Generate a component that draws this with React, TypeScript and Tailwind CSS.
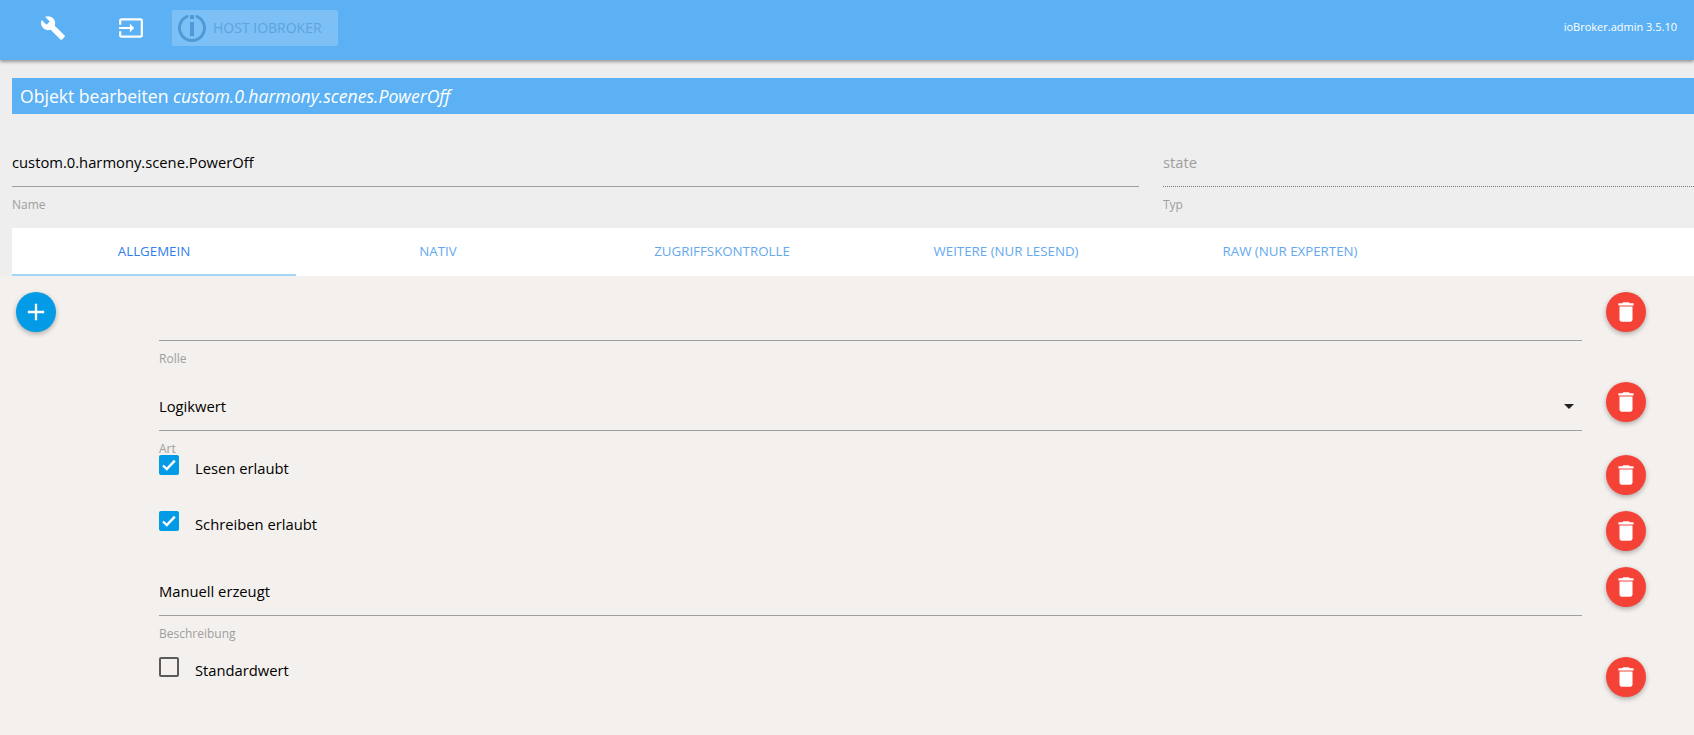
import { MdAdd, MdBuild, MdDelete, MdInput } from "react-icons/md";

const tabs = ["Allgemein", "Nativ", "Zugriffskontrolle", "Weitere (nur lesend)", "Raw (nur Experten)"];

function DeleteButton({ top }: { top: string }) {
  return (
    <button className={`${top} w-10 h-10 shrink-0 ml-6 rounded-full bg-[#f44336] text-white flex items-center justify-center shadow-[0_2px_5px_rgba(0,0,0,0.3)]`}>
      <MdDelete size={26} />
    </button>
  );
}

function Field({ value, label, arrow }: { value?: string; label: string; arrow?: boolean }) {
  return (
    <div className="w-[1423px]">
      <div className="h-[46px] pb-[2px] border-b border-[#9e9e9e] flex items-center justify-between">
        <span className="text-[14.75px] text-black">{value}</span>
        {arrow && (
          <svg width="10" height="5" viewBox="0 0 10 5" className="mr-[8px]">
            <path d="M0 0h10L5 5z" fill="#222" />
          </svg>
        )}
      </div>
      <div className="mt-[9px] text-[12px] leading-[18px] text-[#9e9e9e]">{label}</div>
    </div>
  );
}

function CheckRow({ checked, label }: { checked: boolean; label: string }) {
  return (
    <div className="w-[1423px] flex items-start">
      {checked ? (
        <span className="w-5 h-5 rounded-[2px] bg-[#039be5] flex items-center justify-center">
          <svg width="14" height="12" viewBox="0 0 14 12">
            <path d="M1 6.5l3.8 3.6 8-8.4" fill="none" stroke="#fff" strokeWidth="2.4" />
          </svg>
        </span>
      ) : (
        <span className="w-5 h-5 rounded-[2px] border-2 border-[#5a5a5a]" />
      )}
      <span className="ml-4 mt-[3px] text-[14.75px] leading-5 text-black">{label}</span>
    </div>
  );
}

export default function App() {
  return (
    <div className="h-[735px] overflow-hidden bg-[#eeeeee] font-['Open_Sans','Noto_Sans',sans-serif]">
      {/* header */}
      <header className="h-[60px] bg-[#5cb1f4] shadow-[0_2px_3px_rgba(0,0,0,0.35)] flex items-center text-white relative">
        <MdBuild size={26} className="ml-[40px] mb-[5px]" />
        <MdInput size={26} className="ml-[52px] mb-[5px]" />
        <div className="ml-[28px] mb-[5px] w-[166px] h-[36px] rounded-[2px] bg-white/20 flex items-center pl-[6px]">
          <svg width="28" height="28" viewBox="0 0 28 28">
            <path d="M17.9 2.1A12.5 12.5 0 1 1 10.1 2.1" fill="none" stroke="#4f9ad6" strokeWidth="3" />
            <rect x="12" y="1" width="4" height="4" fill="#4f9ad6" />
            <rect x="12" y="8" width="4" height="14" fill="#4f9ad6" />
          </svg>
          <span className="ml-[7px] text-[14px] text-[#5fa3dc]">HOST IOBROKER</span>
        </div>
        <div className="ml-auto mr-[17px] mb-[6px] text-[11px]">ioBroker.admin 3.5.10</div>
      </header>

      <div className="pl-3">
        <h1 className="mt-[18px] h-9 bg-[#5cb1f4] text-white text-[17.6px] leading-9 pl-2">
          Objekt bearbeiten <i>custom.0.harmony.scenes.PowerOff</i>
        </h1>

        {/* name + type */}
        <div className="flex gap-6 mt-[26px]">
          <div className="w-[1127px] shrink-0">
            <div className="h-[47px] pb-[2px] border-b border-[#9e9e9e] flex items-center text-[14.75px] text-black">custom.0.harmony.scene.PowerOff</div>
            <div className="mt-[9px] text-[12px] leading-[18px] text-[#9e9e9e]">Name</div>
          </div>
          <div className="flex-1">
            <div className="h-[47px] pb-[2px] border-b border-dotted border-[#777] flex items-center text-[14.75px] text-[#9e9e9e]">state</div>
            <div className="mt-[9px] text-[12px] leading-[18px] text-[#9e9e9e]">Typ</div>
          </div>
        </div>

        {/* tabs */}
        <div className="mt-[14px] h-12 bg-white flex">
          {tabs.map((t, i) => (
            <div
              key={t}
              className={`w-[284px] flex items-center justify-center text-[13.3px] uppercase ${
                i === 0 ? "text-[#2f80ed] border-b-2 border-[#a5d5f7] pt-[2px]" : "text-[#64a9ee]"
              }`}
            >
              {t}
            </div>
          ))}
        </div>
      </div>

      {/* form */}
      <div className="h-[459px] bg-[#f4f0ed] flex">
        <div className="w-[159px] shrink-0 pl-4 pt-4">
          <button className="w-10 h-10 rounded-full bg-[#039be5] text-white flex items-center justify-center shadow-[0_2px_5px_rgba(0,0,0,0.3)]">
            <MdAdd size={28} />
          </button>
        </div>
        <div className="flex-1">
          <div className="h-[90px] flex">
            <div className="pt-[19px]"><Field label="Rolle" /></div>
            <DeleteButton top="mt-4" />
          </div>
          <div className="h-[89px] flex">
            <div className="pt-[19px]"><Field value="Logikwert" label="Art" arrow /></div>
            <DeleteButton top="mt-4" />
          </div>
          <div className="h-[56px] flex">
            <CheckRow checked label="Lesen erlaubt" />
            <DeleteButton top="mt-0" />
          </div>
          <div className="h-[55px] flex">
            <CheckRow checked label="Schreiben erlaubt" />
            <DeleteButton top="mt-0" />
          </div>
          <div className="h-[91px] flex">
            <div className="pt-[4px]"><Field value="Manuell erzeugt" label="Beschreibung" /></div>
            <DeleteButton top="mt-[1px]" />
          </div>
          <div className="flex">
            <CheckRow checked={false} label="Standardwert" />
            <DeleteButton top="mt-0" />
          </div>
        </div>
      </div>
    </div>
  );
}
